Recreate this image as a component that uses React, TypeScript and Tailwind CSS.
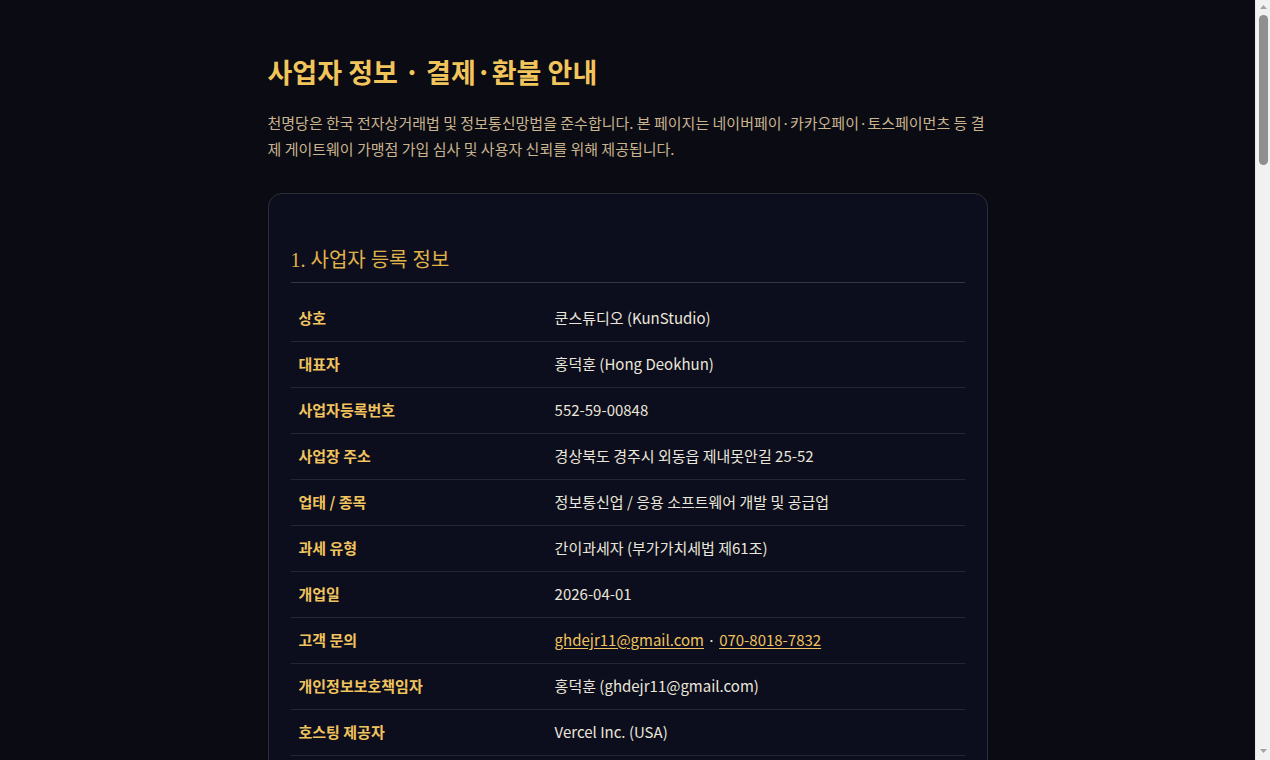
import React from 'react';

const bizRows: { label: string; value: React.ReactNode }[] = [
  { label: '상호', value: '쿤스튜디오 (KunStudio)' },
  { label: '대표자', value: '홍덕훈 (Hong Deokhun)' },
  { label: '사업자등록번호', value: '552-59-00848' },
  { label: '사업장 주소', value: '경상북도 경주시 외동읍 제내못안길 25-52' },
  { label: '업태 / 종목', value: '정보통신업 / 응용 소프트웨어 개발 및 공급업' },
  { label: '과세 유형', value: '간이과세자 (부가가치세법 제61조)' },
  { label: '개업일', value: '2026-04-01' },
  {
    label: '고객 문의',
    value: (
      <>
        <a href="#" className="text-[#f0c35e] underline underline-offset-2">ghdejr11@gmail.com</a>
        {' · '}
        <a href="#" className="text-[#f0c35e] underline underline-offset-2">070-8018-7832</a>
      </>
    ),
  },
  { label: '개인정보보호책임자', value: '홍덕훈 (ghdejr11@gmail.com)' },
  { label: '호스팅 제공자', value: 'Vercel Inc. (USA)' },
  { label: '통신판매업 신고', value: '신고 진행 중 (간이과세자 신고 예정)' },
];

const payRows = [
  { label: '결제 대행사', value: '네이버페이 · 카카오페이 · 토스페이먼츠' },
  { label: '결제 수단', value: '신용/체크카드, 간편결제, 계좌이체' },
  { label: '상품 유형', value: '디지털 콘텐츠 (사주·운세 리포트, 이용권)' },
  { label: '가격 표시', value: '부가가치세 포함 원화(KRW) 표시' },
  { label: '제공 시점', value: '결제 완료 즉시 온라인 제공' },
  { label: '영수증', value: '결제 완료 후 이메일로 자동 발송' },
];

const refundItems = [
  '결제 후 7일 이내, 콘텐츠를 열람하지 않은 경우 전액 환불됩니다.',
  '리포트가 생성·열람된 디지털 콘텐츠는 전자상거래법 제17조 제2항에 따라 청약철회가 제한됩니다.',
  '서비스 장애 또는 콘텐츠 오류로 정상 제공이 불가능한 경우 전액 환불됩니다.',
  '이용권(정기 결제)은 남은 기간에 비례하여 부분 환불됩니다.',
  '환불은 요청 접수 후 영업일 기준 3~5일 이내에 원 결제수단으로 처리됩니다.',
  '미성년자가 법정대리인의 동의 없이 결제한 경우 취소할 수 있습니다.',
];

const procSteps = [
  { label: '1단계', value: '고객 문의 이메일로 환불 요청 (주문번호 기재)' },
  { label: '2단계', value: '요청 접수 확인 및 열람 여부 확인 (1영업일 이내)' },
  { label: '3단계', value: '환불 승인 및 결제 취소 처리' },
  { label: '4단계', value: '카드사·결제사 정책에 따라 3~5영업일 내 반영' },
];

const Row = ({ label, value }: { label: string; value: React.ReactNode }) => (
  <tr className="border-b border-[#23253a]">
    <th className="w-[38%] h-[46px] px-2 text-left align-middle text-[15px] font-bold text-[#f0c35e]">{label}</th>
    <td className="h-[46px] px-2 align-middle text-[15px] text-[#ebe6da]">{value}</td>
  </tr>
);

const Heading = ({ children }: { children: React.ReactNode }) => (
  <h2
    className="pb-[7px] border-b border-[#34364a] text-[20px] text-[#e0b24a]"
    style={{ fontFamily: '"Liberation Serif", "Noto Sans CJK KR", serif' }}
  >
    {children}
  </h2>
);

// window scrollbar as seen in the screenshot
const ScrollBar = () => (
  <div className="w-[15px] shrink-0 h-screen bg-[#f1f1f1] flex flex-col items-center border-l border-[#e8e8e8]">
    <svg width="9" height="10" viewBox="0 0 9 10" className="mt-[2px]">
      <path d="M1 7h7L4.5 3z" fill="#a3a3a3" />
    </svg>
    <div className="mt-[3px] w-[9px] h-[150px] rounded-full bg-[#8f8f8f]" />
    <div className="flex-1" />
    <svg width="9" height="10" viewBox="0 0 9 10" className="mb-[4px]">
      <path d="M1 3h7L4.5 7z" fill="#a3a3a3" />
    </svg>
  </div>
);

export default function App() {
  return (
    <div className="flex h-screen bg-[#0a0b13]">
      <div
        className="flex-1 h-screen overflow-y-auto bg-[#0a0b13] text-[#ebe6da]"
        style={{ fontFamily: '"Noto Sans CJK KR", "Noto Sans", sans-serif' }}
      >
        <main className="w-[720px] mx-auto pt-[52px] pb-24">
          <h1 className="text-[27px] font-bold leading-[40px] text-[#f2c45c]">사업자 정보 · 결제·환불 안내</h1>
          <p className="mt-[18px] text-[15px] leading-[26px] text-[#c9b48f]">
            천명당은 한국 전자상거래법 및 정보통신망법을 준수합니다. 본 페이지는 네이버페이·카카오페이·토스페이먼츠 등 결제 게이트웨이 가맹점 가입 심사 및 사용자 신뢰를 위해 제공됩니다.
          </p>

          <div className="mt-[31px] rounded-[14px] border border-[#2e2d35] bg-[#0c0e1d] px-[22px] pt-[51px] pb-10 flex flex-col gap-[52px]">
            <section>
              <Heading>1. 사업자 등록 정보</Heading>
              <table className="mt-3 w-full border-collapse">
                <tbody>
                  {bizRows.map((r) => (
                    <Row key={r.label} label={r.label} value={r.value} />
                  ))}
                </tbody>
              </table>
            </section>

            <section>
              <Heading>2. 결제 안내</Heading>
              <table className="mt-3 w-full border-collapse">
                <tbody>
                  {payRows.map((r) => (
                    <Row key={r.label} label={r.label} value={r.value} />
                  ))}
                </tbody>
              </table>
            </section>

            <section>
              <Heading>3. 환불 정책</Heading>
              <ul className="mt-4 flex flex-col gap-3 pl-5 list-disc text-[15px] leading-[25px] text-[#ebe6da] marker:text-[#e0b24a]">
                {refundItems.map((t) => (
                  <li key={t}>{t}</li>
                ))}
              </ul>
            </section>

            <section>
              <Heading>4. 환불 절차</Heading>
              <table className="mt-3 w-full border-collapse">
                <tbody>
                  {procSteps.map((r) => (
                    <Row key={r.label} label={r.label} value={r.value} />
                  ))}
                </tbody>
              </table>
            </section>

            <section>
              <Heading>5. 청약철회 제한 안내</Heading>
              <p className="mt-4 text-[15px] leading-[26px] text-[#c9b48f]">
                디지털 콘텐츠의 특성상 결제 즉시 리포트가 생성되어 제공되는 경우, 「전자상거래 등에서의 소비자보호에 관한 법률」 제17조 제2항 제5호에 따라 청약철회가 제한될 수 있습니다. 회사는 결제 전 해당 사실을 명확히 고지하며, 무료 미리보기를 통해 콘텐츠 일부를 확인할 수 있도록 합니다.
              </p>
            </section>

            <section>
              <Heading>6. 분쟁 해결</Heading>
              <p className="mt-4 text-[15px] leading-[26px] text-[#c9b48f]">
                서비스 이용과 관련한 분쟁은 고객 문의 채널을 통해 우선 협의하며, 협의가 이루어지지 않을 경우 한국소비자원 또는 전자거래분쟁조정위원회에 조정을 신청할 수 있습니다.
              </p>
            </section>
          </div>

          <footer className="mt-10 text-center text-[13px] text-[#8a8170]">
            © 2026 쿤스튜디오 (KunStudio) · 천명당. All rights reserved.
          </footer>
        </main>
      </div>
      <ScrollBar />
    </div>
  );
}
